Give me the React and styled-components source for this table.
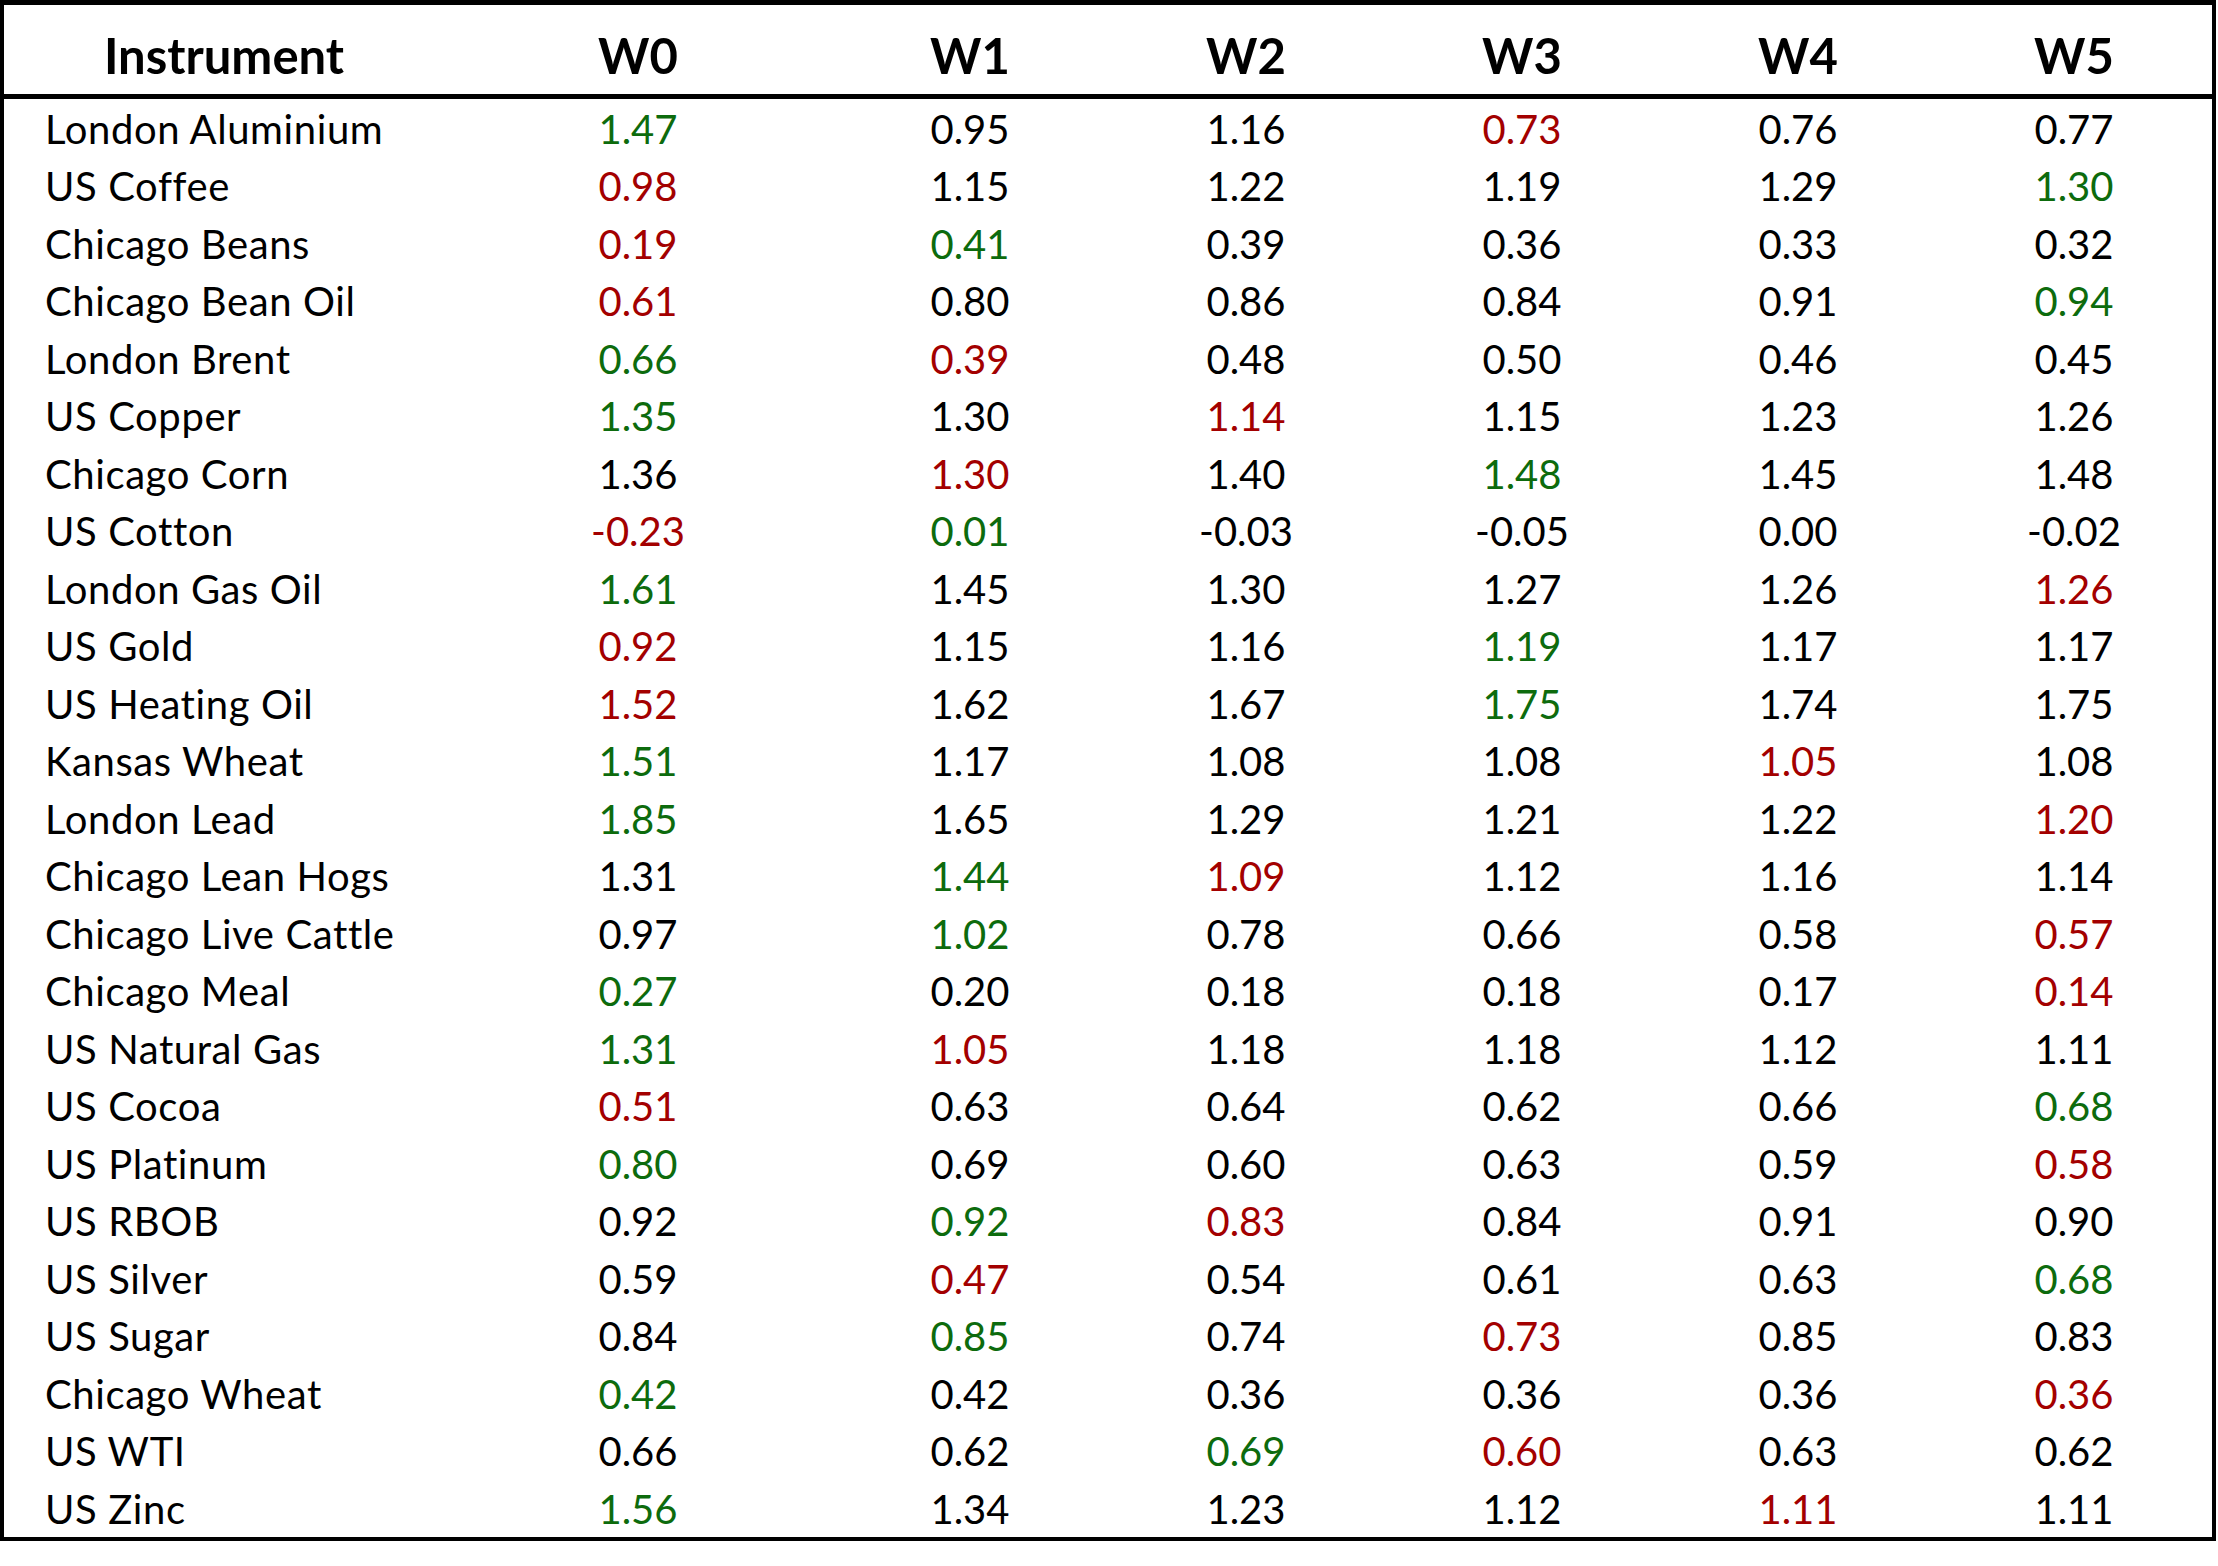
import React from "react"
import styled, { createGlobalStyle } from "styled-components"

const GlobalStyle = createGlobalStyle`
  html, body {
    margin: 0;
    padding: 0;
    background: #fff;
  }
  body {
    font-family: Lato, "Open Sans", sans-serif;
    color: #000;
  }
`

const columns = ["W0", "W1", "W2", "W3", "W4", "W5"]

// "g" = highest (green), "r" = lowest (red)
const rows = [
  ["London Aluminium", "1.47g 0.95 1.16 0.73r 0.76 0.77"],
  ["US Coffee", "0.98r 1.15 1.22 1.19 1.29 1.30g"],
  ["Chicago Beans", "0.19r 0.41g 0.39 0.36 0.33 0.32"],
  ["Chicago Bean Oil", "0.61r 0.80 0.86 0.84 0.91 0.94g"],
  ["London Brent", "0.66g 0.39r 0.48 0.50 0.46 0.45"],
  ["US Copper", "1.35g 1.30 1.14r 1.15 1.23 1.26"],
  ["Chicago Corn", "1.36 1.30r 1.40 1.48g 1.45 1.48"],
  ["US Cotton", "-0.23r 0.01g -0.03 -0.05 0.00 -0.02"],
  ["London Gas Oil", "1.61g 1.45 1.30 1.27 1.26 1.26r"],
  ["US Gold", "0.92r 1.15 1.16 1.19g 1.17 1.17"],
  ["US Heating Oil", "1.52r 1.62 1.67 1.75g 1.74 1.75"],
  ["Kansas Wheat", "1.51g 1.17 1.08 1.08 1.05r 1.08"],
  ["London Lead", "1.85g 1.65 1.29 1.21 1.22 1.20r"],
  ["Chicago Lean Hogs", "1.31 1.44g 1.09r 1.12 1.16 1.14"],
  ["Chicago Live Cattle", "0.97 1.02g 0.78 0.66 0.58 0.57r"],
  ["Chicago Meal", "0.27g 0.20 0.18 0.18 0.17 0.14r"],
  ["US Natural Gas", "1.31g 1.05r 1.18 1.18 1.12 1.11"],
  ["US Cocoa", "0.51r 0.63 0.64 0.62 0.66 0.68g"],
  ["US Platinum", "0.80g 0.69 0.60 0.63 0.59 0.58r"],
  ["US RBOB", "0.92 0.92g 0.83r 0.84 0.91 0.90"],
  ["US Silver", "0.59 0.47r 0.54 0.61 0.63 0.68g"],
  ["US Sugar", "0.84 0.85g 0.74 0.73r 0.85 0.83"],
  ["Chicago Wheat", "0.42g 0.42 0.36 0.36 0.36 0.36r"],
  ["US WTI", "0.66 0.62 0.69g 0.60r 0.63 0.62"],
  ["US Zinc", "1.56g 1.34 1.23 1.12 1.11r 1.11"],
]

const parseCell = (raw) => {
  const last = raw.slice(-1)
  if (last === "g" || last === "r") return { value: raw.slice(0, -1), tone: last }
  return { value: raw, tone: null }
}

const toneColor = {
  g: "#0d6b0d",
  r: "#a30000",
}

export default function App() {
  return (
    <>
      <GlobalStyle />
      <Table>
        <colgroup>
          <col style={{ width: 440 }} />
          <col style={{ width: 388 }} />
          {columns.slice(1).map((c) => (
            <col key={c} style={{ width: 276 }} />
          ))}
        </colgroup>
        <thead>
          <HeadRow>
            <HeadCell>Instrument</HeadCell>
            {columns.map((c) => (
              <HeadCell key={c}>{c}</HeadCell>
            ))}
          </HeadRow>
        </thead>
        <tbody>
          {rows.map(([name, values]) => (
            <BodyRow key={name}>
              <NameCell>{name}</NameCell>
              {values.split(" ").map((raw, i) => {
                const { value, tone } = parseCell(raw)
                return (
                  <ValueCell key={i} $tone={tone}>
                    {value}
                  </ValueCell>
                )
              })}
            </BodyRow>
          ))}
        </tbody>
      </Table>
    </>
  )
}

const Table = styled.table`
  width: 2216px;
  table-layout: fixed;
  border-collapse: separate;
  border-spacing: 0;
  border: 4px solid #000;
  border-top-width: 5px;
  font-family: Lato, "Open Sans", sans-serif;
`

const HeadRow = styled.tr`
  height: 94px;
`

const HeadCell = styled.th`
  padding: 10px 0 0;
  border-bottom: 5px solid #000;
  font-size: 49px;
  font-weight: 700;
  text-align: center;
  vertical-align: middle;
  color: #000;
`

const BodyRow = styled.tr`
  height: 57.5px;
`

const NameCell = styled.td`
  padding: 2px 0 0 41px;
  font-size: 40px;
  letter-spacing: 0.6px;
  white-space: nowrap;
  vertical-align: middle;
`

const ValueCell = styled.td`
  padding: 2px 0 0;
  font-size: 40px;
  text-align: center;
  vertical-align: middle;
  color: ${({ $tone }) => ($tone ? toneColor[$tone] : "#000")};
`
